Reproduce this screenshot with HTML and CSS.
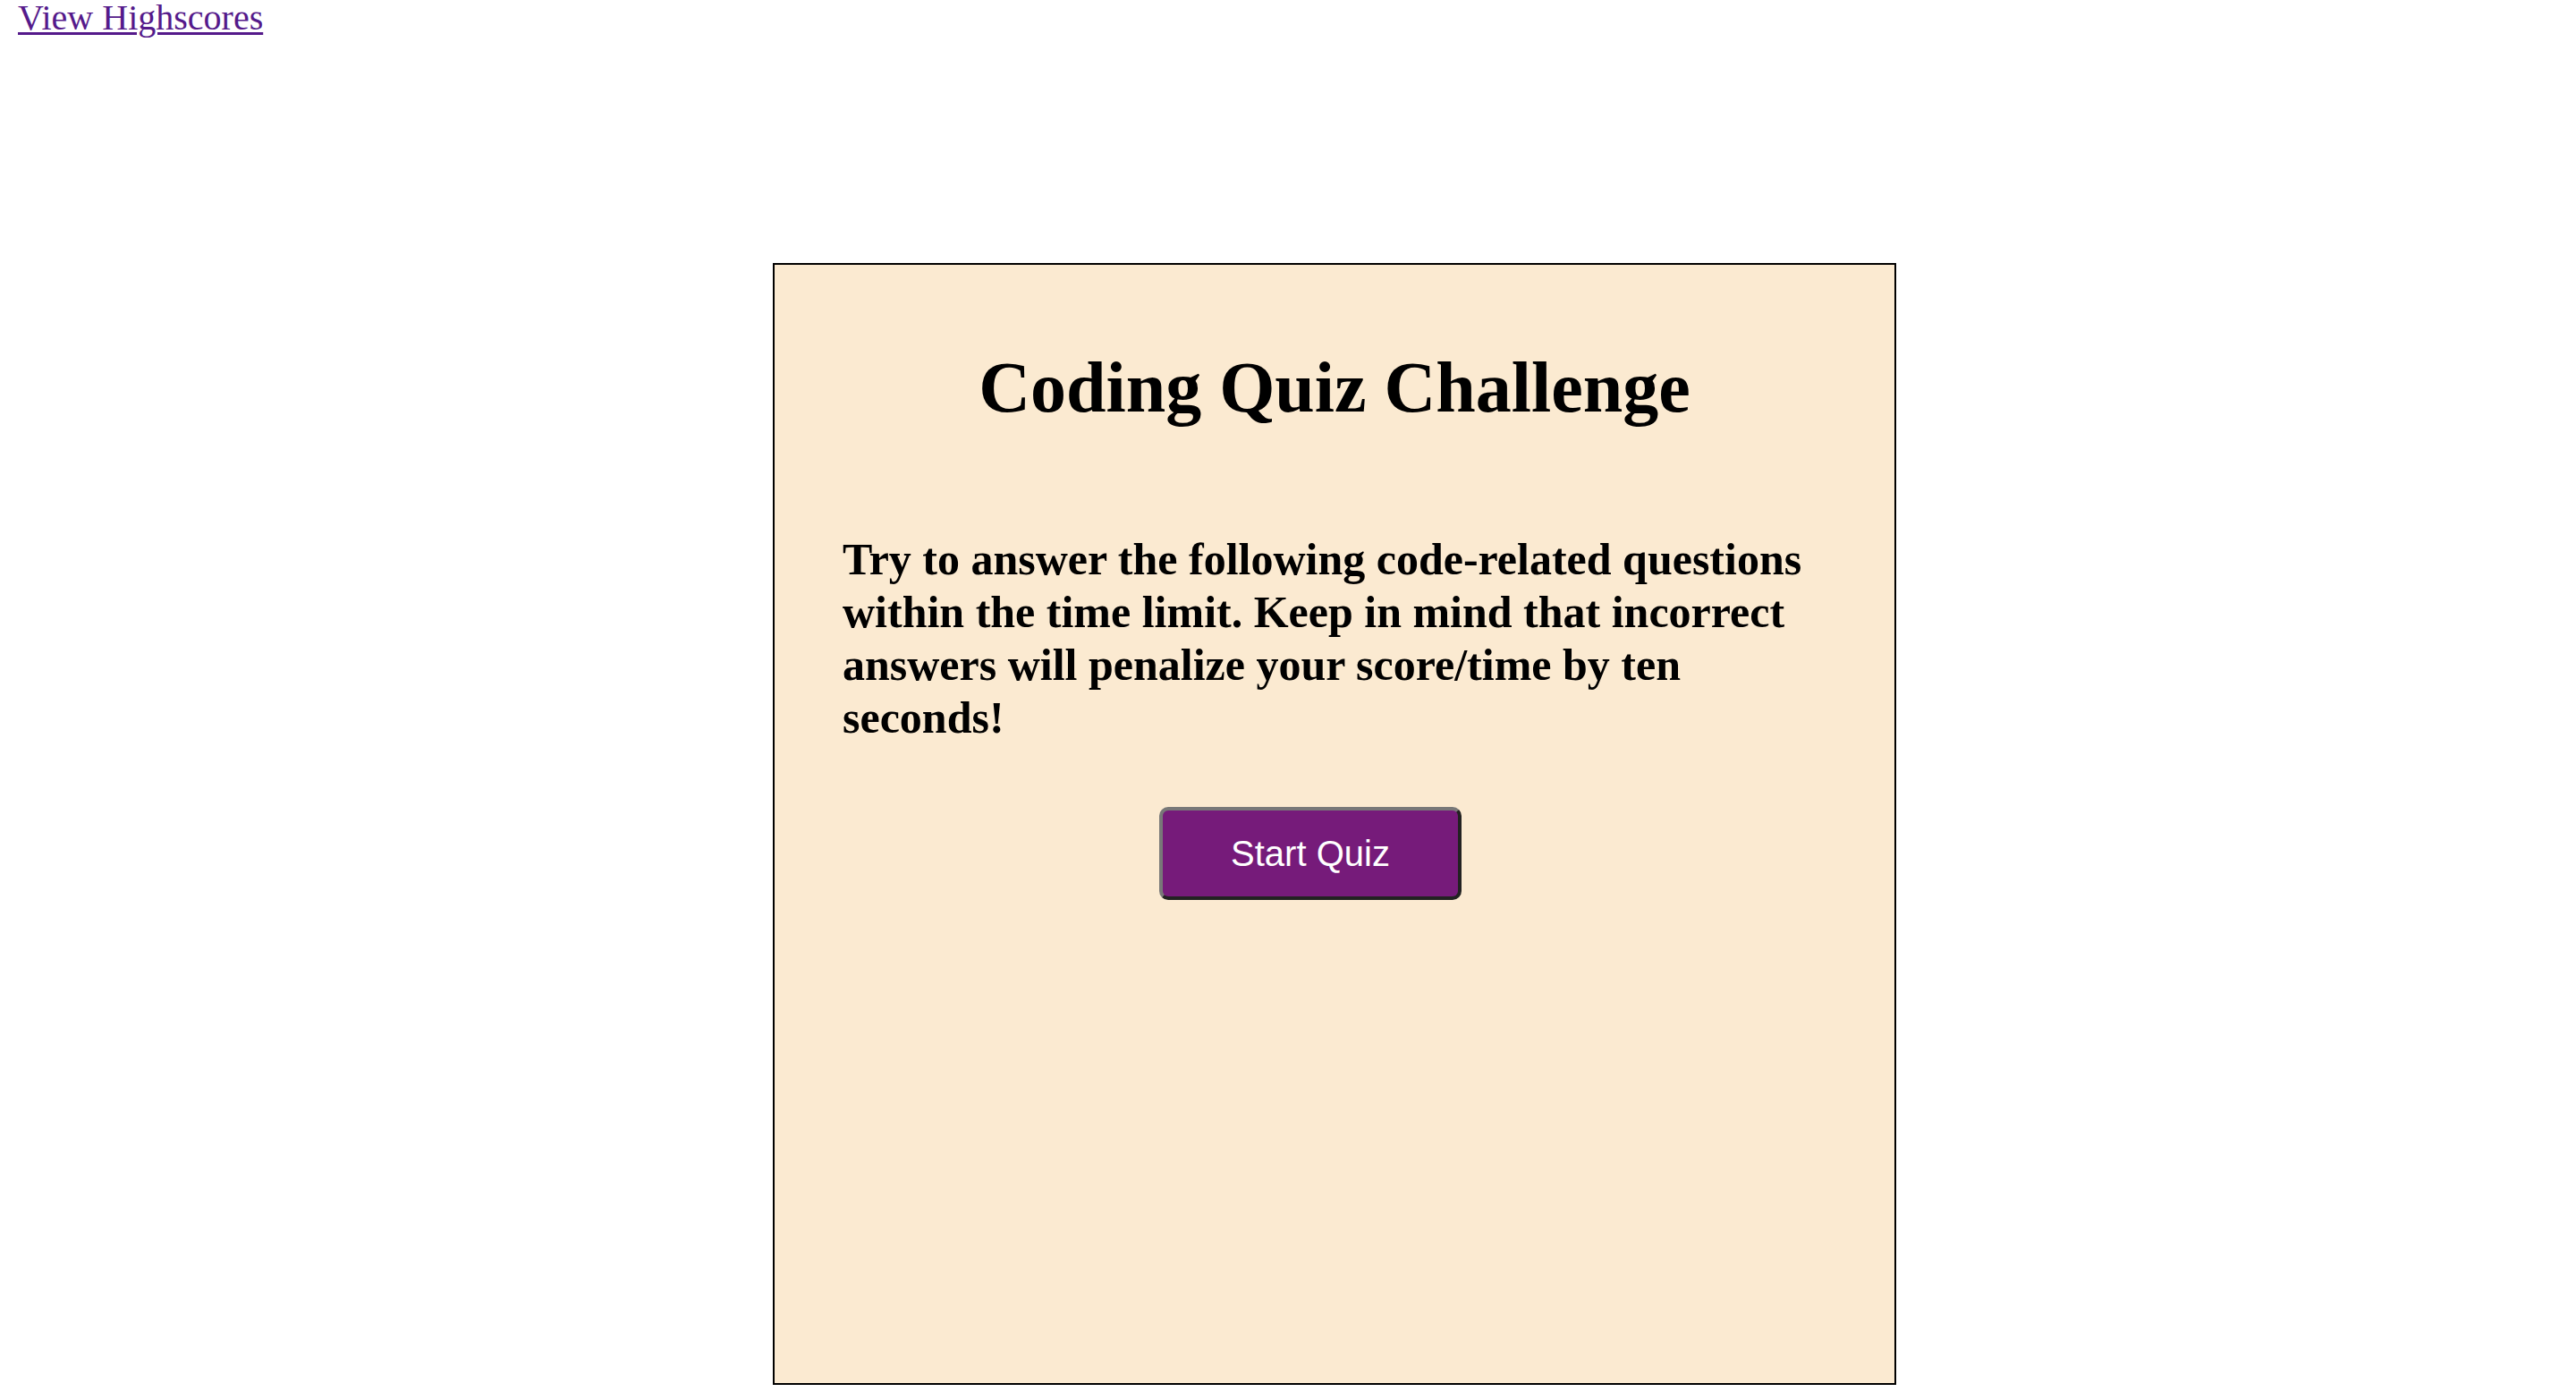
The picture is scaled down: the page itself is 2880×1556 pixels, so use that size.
FILE: index.html
```html
<!DOCTYPE html>
<html lang="en">
<head>
<meta charset="utf-8">
<title>Coding Quiz Challenge</title>
<link rel="stylesheet" href="styles.css">
</head>
<body>
<header class="top-bar">
  <a class="highscores-link" href="#">View Highscores</a>
</header>
<main class="quiz-card">
  <h1 class="quiz-title">Coding Quiz Challenge</h1>
  <p class="quiz-intro">Try to answer the following code-related questions within the time limit. Keep in mind that incorrect answers will penalize your score/time by ten seconds!</p>
  <div class="start-row">
    <button class="start-btn" type="button">Start Quiz</button>
  </div>
</main>
</body>
</html>
```
FILE: styles.css
```css
html, body {
  margin: 0;
  padding: 0;
  background: #ffffff;
}

body {
  font-family: "Liberation Serif", "Times New Roman", serif;
  color: #000;
}

.top-bar {
  height: 40px;
  padding-left: 20px;
}

.highscores-link {
  font-size: 40px;
  line-height: 40px;
  color: #551a8b;
  text-decoration: underline;
  text-decoration-thickness: 3px;
  text-underline-offset: 3px;
}

.quiz-card {
  box-sizing: border-box;
  margin: 254px 0 0 864px;
  width: 1256px;
  height: 1254px;
  border: 2px solid #000;
  background: #fbead1;
  padding: 91px 80px 0 76px;
}

.quiz-title {
  margin: 0 0 0 4px;
  font-size: 80px;
  line-height: 92px;
  font-weight: bold;
  text-align: center;
}

.quiz-intro {
  margin: 117px 0 0 0;
  font-size: 50px;
  line-height: 59px;
  font-weight: bold;
}

.start-row {
  display: flex;
  justify-content: center;
  padding-right: 50px;
  margin-top: 70px;
}

.start-btn {
  box-sizing: border-box;
  width: 338px;
  height: 104px;
  padding: 0;
  background: #761b7a;
  color: #ffffff;
  font-family: "Liberation Sans", Arial, sans-serif;
  font-size: 40px;
  border-width: 4px;
  border-style: solid;
  border-color: #787878 #222222 #222222 #787878;
  border-radius: 10px;
  cursor: pointer;
}
```
